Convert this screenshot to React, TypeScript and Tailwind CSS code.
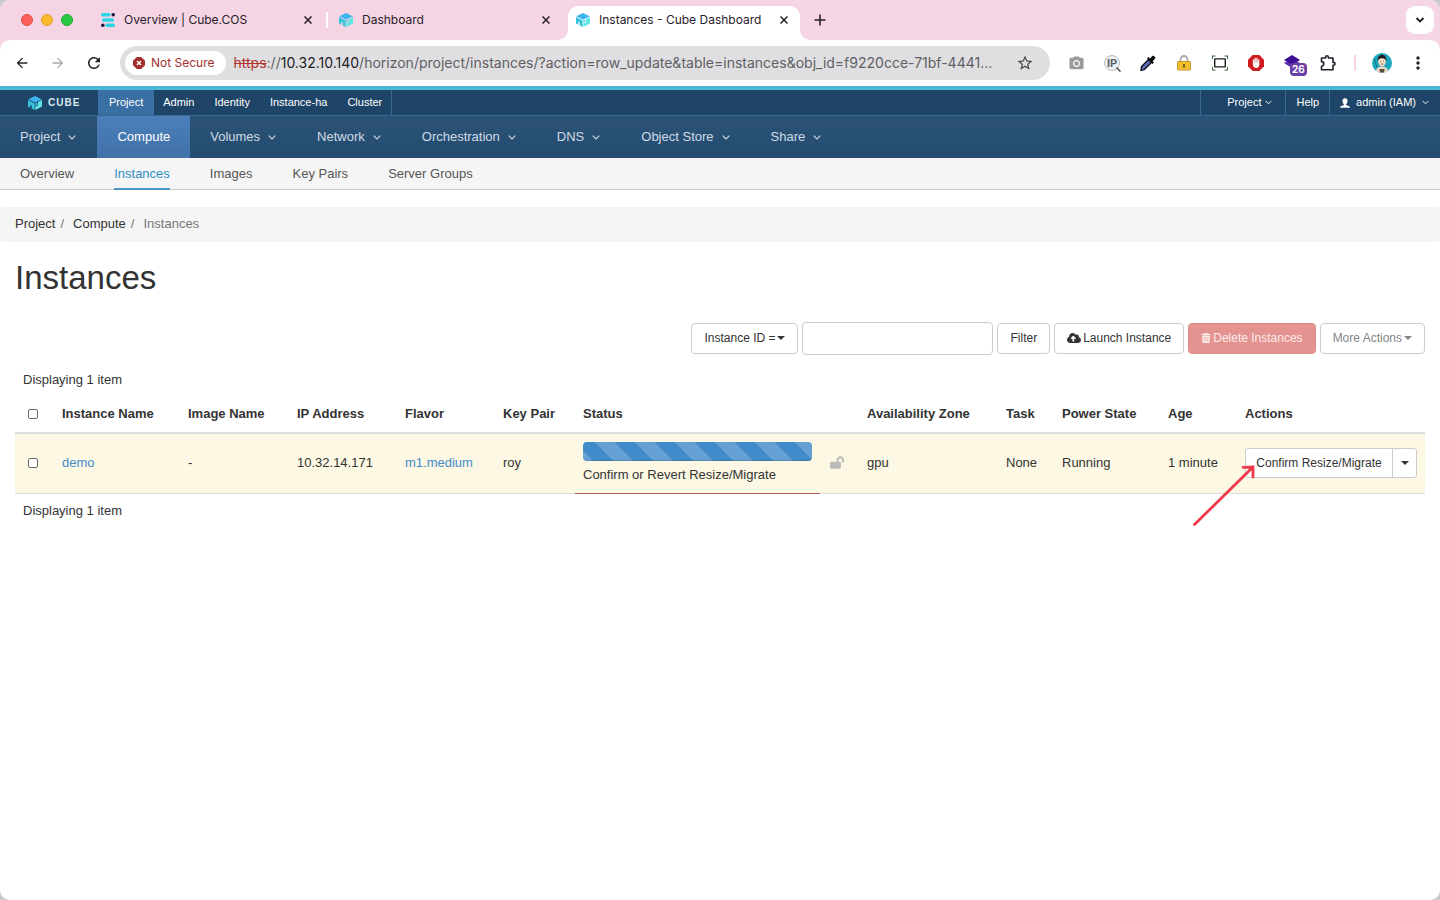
import { ReactNode, useState } from "react";
import { FaCloudUploadAlt, FaLockOpen, FaTrashAlt } from "react-icons/fa";
import {
  MdArrowBack,
  MdArrowForward,
  MdCameraAlt,
  MdMoreVert,
  MdRefresh,
  MdStarBorder,
} from "react-icons/md";

const topTabs = ["Admin", "Identity", "Instance-ha", "Cluster"];

const panels = [
  { name: "Project", menu: true },
  { name: "Compute", menu: false },
  { name: "Volumes", menu: true },
  { name: "Network", menu: true },
  { name: "Orchestration", menu: true },
  { name: "DNS", menu: true },
  { name: "Object Store", menu: true },
  { name: "Share", menu: true },
];

const subPanels = [
  "Overview",
  "Instances",
  "Images",
  "Key Pairs",
  "Server Groups",
];

const columns = [
  { name: "Instance Name", width: "w-[126px]" },
  { name: "Image Name", width: "w-[109px]" },
  { name: "IP Address", width: "w-[108px]" },
  { name: "Flavor", width: "w-[98px]" },
  { name: "Key Pair", width: "w-[80px]" },
  { name: "Status", width: "w-[245px]" },
  { name: "", width: "w-[39px]" },
  { name: "Availability Zone", width: "w-[139px]" },
  { name: "Task", width: "w-[56px]" },
  { name: "Power State", width: "w-[106px]" },
  { name: "Age", width: "w-[77px]" },
  { name: "Actions", width: "w-[188px]" },
];

function CubeLogo({ className }: { className?: string }) {
  return (
    <svg viewBox="0 0 28 28" className={className} aria-hidden="true">
      <path d="M14 0 27.500 6.500 14 13.500 0.500 6.500Z" fill="#3cb4ee" />
      <path d="M0 8 13.300 15V28L7.500 25V19L4.500 17.500V23.500L0 21Z" fill="#35c4dc" />
      <path d="M28 8V21L14.700 28V21L20 18.500V12.200Z" fill="#5fe6e4" />
      <path d="M14.700 15 18.500 13V17.500L14.700 19.500Z" fill="#46d3e2" />
    </svg>
  );
}

function CosLogo() {
  return (
    <svg viewBox="0 0 14 14" className="h-[14px] w-[14px]" aria-hidden="true">
      <g fill="#2fd3e6">
        <rect x="0" y="0" width="9.500" height="3.600" rx="1.500" />
        <rect x="1" y="5.200" width="12" height="3.600" rx="1.500" />
        <rect x="4.500" y="10.400" width="9.500" height="3.600" rx="1.500" />
      </g>
      <g fill="#1d1740">
        <circle cx="12.200" cy="1.800" r="1.800" />
        <circle cx="1.800" cy="12.200" r="1.800" />
      </g>
    </svg>
  );
}

function Chevron({ className }: { className?: string }) {
  return (
    <svg viewBox="0 0 8 5" className={className} fill="none" aria-hidden="true">
      <path d="M0.700 0.700 4 4 7.300 0.700" stroke="currentColor" strokeWidth="1.100" />
    </svg>
  );
}

function Caret() {
  return (
    <svg viewBox="0 0 8 4" className="h-1 w-2" aria-hidden="true">
      <path d="M0 0H8L4 4Z" fill="currentColor" />
    </svg>
  );
}

function UserIcon() {
  return (
    <svg viewBox="0 0 10 10" className="h-[10px] w-[10px]" aria-hidden="true">
      <path
        d="M5 0.300C3.400 0.300 2.500 1.400 2.500 3c0 1.300.6 2.600 1.400 3.200v.9L.8 8.300C.3 8.500.2 9 .2 9.700h9.600c0-.7-.1-1.200-.6-1.400L6.100 7.100v-.9C6.900 5.600 7.500 4.300 7.500 3 7.500 1.400 6.600.3 5 .3Z"
        fill="currentColor"
      />
    </svg>
  );
}

function BrowserTab({
  title,
  icon,
  active,
}: {
  title: string;
  icon: ReactNode;
  active?: boolean;
}) {
  return (
    <div
      className={
        active
          ? "relative flex h-[34px] w-[232px] items-center rounded-t-[10px] bg-white pr-3 pb-[6px] pl-2"
          : "flex h-[34px] w-[238px] items-center pr-4 pb-[6px] pl-[11px]"
      }
    >
      {active && (
        <>
          <svg viewBox="0 0 10 10" className="absolute bottom-0 -left-[10px] h-[10px] w-[10px]">
            <path d="M10 0V10H0A10 10 0 0 0 10 0Z" fill="#fff" />
          </svg>
          <svg viewBox="0 0 10 10" className="absolute -right-[10px] bottom-0 h-[10px] w-[10px]">
            <path d="M0 0V10H10A10 10 0 0 1 0 0Z" fill="#fff" />
          </svg>
        </>
      )}
      {icon}
      <span className="ml-[9px] flex-1 truncate text-xs text-[#27202a]">
        {title}
      </span>
      <button type="button" aria-label={`Close ${title}`}>
        <svg viewBox="0 0 8 8" className="h-2 w-2" fill="none">
          <path d="M.5.5 7.500 7.500M7.500.5.5 7.500" stroke="#27202a" strokeWidth="1.500" />
        </svg>
      </button>
    </div>
  );
}

function ToolButton({ label, children }: { label: string; children: ReactNode }) {
  return (
    <button
      type="button"
      aria-label={label}
      className="flex h-9 w-9 shrink-0 items-center justify-center"
    >
      {children}
    </button>
  );
}

function BrowserBar() {
  return (
    <header className="bg-[#f5d5e4] font-['Inter',sans-serif]">
      <div className="flex h-10 items-end">
        <div className="flex h-10 w-[90px] shrink-0 items-center gap-2 pl-[21px]">
          <span className="h-3 w-3 rounded-full border border-[#df4e47] bg-[#fb5f57]" />
          <span className="h-3 w-3 rounded-full border border-[#dfa02f] bg-[#fdbc2f]" />
          <span className="h-3 w-3 rounded-full border border-[#1fa933] bg-[#28c840]" />
        </div>
        <BrowserTab title="Overview | Cube.COS" icon={<CosLogo />} />
        <span className="-ml-[2px] mb-3 h-4 w-[2px] rounded bg-white" />
        <BrowserTab
          title="Dashboard"
          icon={<CubeLogo className="h-[14px] w-[14px]" />}
        />
        <span className="w-[2px]" />
        <BrowserTab
          title="Instances - Cube Dashboard"
          icon={<CubeLogo className="h-[14px] w-[14px]" />}
          active
        />
        <button type="button" aria-label="New tab" className="ml-[14px] flex h-10 items-center">
          <svg viewBox="0 0 12 12" className="h-3 w-3" fill="none">
            <path d="M6 .5V11.500M.5 6H11.500" stroke="#27202a" strokeWidth="1.600" />
          </svg>
        </button>
        <button
          type="button"
          aria-label="Search tabs"
          className="mr-[6px] mb-[6px] ml-auto flex h-7 w-7 items-center justify-center rounded-[9px] bg-white"
        >
          <svg viewBox="0 0 10 6" className="h-[6px] w-[10px]" fill="none">
            <path d="M1.500 1 5 4.500 8.500 1" stroke="#1f1f1f" strokeWidth="1.800" />
          </svg>
        </button>
      </div>

      <div className="flex h-[46px] items-center rounded-t-[10px] bg-white px-1">
        <ToolButton label="Back">
          <MdArrowBack className="h-4 w-4 text-[#27202a]" />
        </ToolButton>
        <ToolButton label="Forward">
          <MdArrowForward className="h-4 w-4 text-[#a8a8a8]" />
        </ToolButton>
        <ToolButton label="Reload">
          <MdRefresh className="h-[18px] w-[18px] text-[#27202a]" />
        </ToolButton>
        <div className="mx-2 flex h-[34px] min-w-0 flex-1 items-center rounded-full bg-[#dfdfe1] pr-4 pl-[5px]">
          <button
            type="button"
            className="flex h-6 shrink-0 items-center gap-[6px] rounded-full bg-white pr-[11px] pl-2 text-xs text-[#a3302c]"
          >
            <svg viewBox="0 0 12 12" className="h-3 w-3">
              <path d="M3.800 0H8.200L12 3.800V8.200L8.200 12H3.800L0 8.200V3.800Z" fill="#a3302c" />
              <path d="M4 4 8 8M8 4 4 8" stroke="#fff" strokeWidth="1.500" />
            </svg>
            Not Secure
          </button>
          <p className="ml-2 flex-1 truncate text-sm text-[#5f6064]">
            <span className="text-[#b3332e] line-through">https</span>://
            <span className="text-[#202124]">10.32.10.140</span>
            /horizon/project/instances/?action=row_update&amp;table=instances&amp;obj_id=f9220cce-71bf-4441...
          </p>
          <button type="button" aria-label="Bookmark this page">
            <MdStarBorder className="h-[18px] w-[18px] text-[#48484c]" />
          </button>
        </div>
        <ToolButton label="Screenshot">
          <MdCameraAlt className="h-[17px] w-[17px] text-[#9b9b9b]" />
        </ToolButton>
        <ToolButton label="IP lookup">
          <span className="relative flex h-4 w-4 items-center justify-center rounded-full border border-[#b5bcc4] bg-[#eef1f4] text-[11px] font-bold text-[#5b6167]">
            IP
            <svg viewBox="0 0 5 5" className="absolute -right-[2px] -bottom-[2px] h-[5px] w-[5px]">
              <path d="M.5.5 4.500 4.500" stroke="#444" strokeWidth="1.500" />
            </svg>
          </span>
        </ToolButton>
        <ToolButton label="Color picker">
          <svg viewBox="0 0 16 16" className="h-4 w-4">
            <path d="M8.500 4.500 11.500 7.500 4.500 14.500 1 15.500 1.500 11.500Z" fill="#5d68b5" stroke="#0b0b12" strokeWidth="1.300" />
            <path d="M7 3.500 8.500 2 10 3.400 12.300 1C13.500-.1 16.200 2.300 15 3.700L12.600 6.200 14 7.500 12.500 9Z" fill="#0b0b12" />
          </svg>
        </ToolButton>
        <ToolButton label="Certificate">
          <svg viewBox="0 0 14 16" className="h-4 w-[14px]">
            <path d="M3.500 8V4.500a3.500 3.500 0 0 1 7 0V8" fill="none" stroke="#a7a9ab" strokeWidth="1.800" />
            <rect x="0.500" y="6.500" width="13" height="8.500" rx="1" fill="#f0bf2e" stroke="#c9952a" />
            <path d="M7 9V12.500" stroke="#5b4210" strokeWidth="1.600" />
          </svg>
        </ToolButton>
        <ToolButton label="Capture area">
          <svg viewBox="0 0 16 16" className="h-4 w-4" fill="none">
            <path d="M.5 4V1H3.500M12.500 1H15.500V4M15.500 12V15H12.500M3.500 15H.5V12" stroke="#3c6b42" strokeWidth="1.100" />
            <rect x="2.700" y="3.900" width="10.600" height="8" rx=".5" stroke="#1f1f1f" strokeWidth="1.400" />
          </svg>
        </ToolButton>
        <ToolButton label="Ad blocker">
          <svg viewBox="0 0 16 16" className="h-4 w-4">
            <path d="M4.700 0H11.300L16 4.700V11.300L11.300 16H4.700L0 11.300V4.700Z" fill="#d01a1f" />
            <path
              d="M5.500 5V9M7.200 3.500V8M8.900 3.500V8M10.600 4.800V9"
              stroke="#fff"
              strokeWidth="1.300"
              strokeLinecap="round"
            />
            <path d="M4.900 7.500H11.200V10C11.200 12 10 13 8.300 13S4.900 12 4.900 9.500Z" fill="#fff" />
          </svg>
        </ToolButton>
        <ToolButton label="Layers, 26 items">
          <span className="relative h-4 w-4">
            <svg viewBox="0 0 16 16" className="h-4 w-4">
              <path d="M8 0 16 5 8 10 0 5Z" fill="#3f0e96" />
              <path d="M0 8 3 6.500 8 9.500 13 6.500 16 8 8 13Z" fill="#5b2bb0" />
            </svg>
            <span className="absolute top-2 left-[6px] rounded-[4px] bg-[#6a40a6] px-[2px] text-[10px] leading-[13px] font-bold text-white">
              26
            </span>
          </span>
        </ToolButton>
        <ToolButton label="Extensions">
          <svg viewBox="0 0 16 16" className="h-4 w-4" fill="none">
            <path
              d="M1.500 3H5.600V2.200a1.400 1.400 0 0 1 2.800 0V3H13V7.400h.6a1.400 1.400 0 0 1 0 2.800H13V14.800H1.500V11.200A2.300 2.300 0 0 0 1.500 6.600Z"
              stroke="#27202a"
              strokeWidth="1.600"
              strokeLinejoin="round"
            />
          </svg>
        </ToolButton>
        <span className="mx-2 h-4 w-[2px] bg-[#f5d5e4]" />
        <ToolButton label="Profile">
          <svg viewBox="0 0 20 20" className="h-5 w-5">
            <circle cx="10" cy="10" r="10" fill="#1ba7bd" />
            <path d="M4 18C4.500 14.500 7 13.500 10 13.500S15.500 14.500 16 18A10 10 0 0 1 4 18Z" fill="#e8d9c6" />
            <path d="M7.500 16H12.500L12 19.500H8Z" fill="#5d4a3a" />
            <ellipse cx="10" cy="8.500" rx="3.800" ry="4.800" fill="#f4dcc3" />
            <path d="M5.800 8C5.300 4 7.500 1.800 10 1.800S14.700 4 14.200 8C13.500 6.500 13 5.300 10 5.300S6.500 6.500 5.800 8Z" fill="#221a1c" />
            <path d="M8.300 8.500H9M11 8.500H11.700M9 11H11" stroke="#4a3029" strokeWidth=".7" />
            <path d="M2.500 6 5 15" stroke="#175d6b" strokeWidth=".8" />
          </svg>
        </ToolButton>
        <ToolButton label="Menu">
          <MdMoreVert className="h-5 w-5 text-[#27202a]" />
        </ToolButton>
      </div>
    </header>
  );
}

function Navigation() {
  return (
    <div className="border-t-4 border-[#4ab9d8]">
      <nav className="flex border-b border-[#386896] bg-[#1e4467] text-[11px] leading-[25px] text-white">
        <a
          href="#home"
          className="flex w-[98px] items-center gap-[6px] pl-7 text-[10px] font-bold tracking-widest text-[#dce6ef]"
        >
          <CubeLogo className="h-[14px] w-[14px]" />
          CUBE
        </a>
        <a href="#project" className="bg-[#3a6fa4] px-[11px]">
          Project
        </a>
        <div className="flex gap-5 border-r border-[#386896] px-[9px]">
          {topTabs.map((tab) => (
            <a key={tab} href={`#${tab.toLowerCase()}`}>
              {tab}
            </a>
          ))}
        </div>
        <div className="ml-auto flex">
          <button
            type="button"
            className="flex items-center gap-1 border-l border-[#386896] pr-[13px] pl-[26px]"
          >
            Project
            <Chevron className="h-[5px] w-[7px]" />
          </button>
          <a href="#help" className="border-l border-[#386896] px-[10px]">
            Help
          </a>
          <button
            type="button"
            className="flex items-center gap-[6px] border-l border-[#386896] pr-[11px] pl-[10px]"
          >
            <UserIcon />
            admin (IAM)
            <Chevron className="h-[5px] w-[7px]" />
          </button>
        </div>
      </nav>
      <nav className="flex bg-linear-to-b from-[#2c5376] to-[#234c70] text-[13px] leading-[42px] text-[#cfdbe6]">
        {panels.map(({ name, menu }) =>
          menu ? (
            <button key={name} type="button" className="flex items-center gap-2 pr-[21px] pl-5">
              {name}
              <Chevron className="h-[5px] w-2" />
            </button>
          ) : (
            <a
              key={name}
              href={`#${name}`}
              className="bg-linear-to-b from-[#4c7fba] to-[#4071a9] px-5 text-white"
            >
              {name}
            </a>
          ),
        )}
      </nav>
      <nav className="flex gap-10 border-b border-[#ccc] bg-[#f5f5f5] px-5 text-[13px] leading-[31px] text-[#555]">
        {subPanels.map((name) => (
          <a
            key={name}
            href={`#${name}`}
            className={
              name === "Instances"
                ? "-mb-px h-8 border-b-2 border-[#4899c8] text-[#2e8fbf]"
                : ""
            }
          >
            {name}
          </a>
        ))}
      </nav>
    </div>
  );
}

function InstanceTable() {
  const [selected, setSelected] = useState(false);
  const box =
    "block h-[10px] w-[10px] appearance-none rounded-[2px] border border-[#6b6b6b] bg-white checked:bg-[#428bca]";
  const cell = "px-2 pb-[2px]";

  return (
    <table className="w-full table-fixed border-collapse text-left text-[13px] leading-5">
      <caption className="px-2 py-[6px] text-left">Displaying 1 item</caption>
      <thead>
        <tr className="border-b-2 border-[#ddd]">
          <th className="w-[39px] py-2 pl-[13px]">
            <input
              type="checkbox"
              aria-label="Select all instances"
              className={box}
              checked={selected}
              onChange={() => setSelected(!selected)}
            />
          </th>
          {columns.map(({ name, width }) => (
            <th key={name} className={`${width} px-2 py-2 whitespace-nowrap`}>
              {name}
            </th>
          ))}
        </tr>
      </thead>
      <tbody>
        <tr className="border-b border-[#ddd] bg-[#fcf8e3]">
          <td className="pb-[2px] pl-[13px]">
            <input
              type="checkbox"
              aria-label="Select demo"
              className={box}
              checked={selected}
              onChange={() => setSelected(!selected)}
            />
          </td>
          <td className={cell}>
            <a href="#demo" className="text-[#428bca]">
              demo
            </a>
          </td>
          <td className={cell}>-</td>
          <td className={cell}>10.32.14.171</td>
          <td className={cell}>
            <a href="#flavor" className="text-[#428bca]">
              m1.medium
            </a>
          </td>
          <td className={cell}>roy</td>
          <td className="border-b border-b-[#b5595a] p-2">
            <div className="mb-1 h-[19px] rounded-[4px] bg-[#428bca] bg-[linear-gradient(45deg,rgba(255,255,255,0.18)_25%,transparent_25%,transparent_50%,rgba(255,255,255,0.18)_50%,rgba(255,255,255,0.18)_75%,transparent_75%)] bg-size-[40px_40px] bg-position-[12px_0] shadow-[inset_0_-1px_0_rgba(0,0,0,0.15)]" />
            Confirm or Revert Resize/Migrate
          </td>
          <td className="pb-[2px] pl-[10px] text-[#bbb]">
            <FaLockOpen className="h-[13px] w-[14px]" aria-label="Unlocked" />
          </td>
          <td className={cell}>gpu</td>
          <td className={cell}>None</td>
          <td className={cell}>Running</td>
          <td className={cell}>1 minute</td>
          <td className={cell}>
            <div className="relative flex h-[30px] text-xs">
              <button
                type="button"
                className="flex-1 rounded-l-[3px] border border-[#ccc] bg-white whitespace-nowrap"
              >
                Confirm Resize/Migrate
              </button>
              <button
                type="button"
                aria-label="More actions for demo"
                className="-ml-px flex w-[25px] items-center justify-center rounded-r-[3px] border border-[#ccc] bg-white"
              >
                <Caret />
              </button>
              <svg
                viewBox="0 0 68 66"
                className="pointer-events-none absolute top-[14px] -left-[55px] h-[66px] w-[68px]"
                fill="none"
                stroke="#ee3a4b"
                strokeWidth="2.800"
                strokeLinecap="round"
                aria-hidden="true"
              >
                <path d="M4.500 62.500 63 5M53 5.300 63 5V15" />
              </svg>
            </div>
          </td>
        </tr>
      </tbody>
    </table>
  );
}

export default function App() {
  const [filter, setFilter] = useState("");
  const button =
    "flex h-[31px] items-center gap-[2px] rounded-[4px] border border-[#ccc] bg-white px-3 pb-[2px] whitespace-nowrap";

  return (
    <div className="min-h-screen bg-[#c9c9c9] font-['Liberation_Sans',Arial,sans-serif] text-[#333]">
      <div className="min-h-screen overflow-hidden rounded-[10px] bg-white">
        <BrowserBar />
        <Navigation />
        <main>
          <ol className="mt-[17px] flex rounded-[4px] bg-[#f5f5f5] px-[15px] pb-[2px] text-[13px] leading-[33px]">
            <li>
              <a href="#project">Project</a>
              <span className="mr-[9px] ml-[5px] text-[#777]">/</span>
            </li>
            <li>
              <a href="#compute">Compute</a>
              <span className="mr-[9px] ml-[5px] text-[#777]">/</span>
            </li>
            <li className="text-[#777]">Instances</li>
          </ol>
          <div className="px-[15px]">
            <h1 className="mt-4 text-[33px] leading-10">Instances</h1>
            <div className="mt-6 flex items-center justify-end gap-1 text-xs">
              <button type="button" className={button}>
                Instance ID =
                <Caret />
              </button>
              <input
                type="text"
                aria-label="Filter value"
                className="h-[33px] w-[191px] rounded-[4px] border border-[#ccc] bg-white px-3"
                value={filter}
                onChange={(e) => setFilter(e.target.value)}
              />
              <button type="button" className={button}>
                Filter
              </button>
              <button type="button" className={button}>
                <FaCloudUploadAlt className="h-[14px] w-[14px]" />
                Launch Instance
              </button>
              <button
                type="button"
                disabled
                className="flex h-[31px] items-center gap-[2px] rounded-[4px] border border-[#e08a87] bg-[#e59391] px-3 pb-[2px] whitespace-nowrap text-[#fbecec]"
              >
                <FaTrashAlt className="h-[10px] w-[10px]" />
                Delete Instances
              </button>
              <button type="button" disabled className={`${button} text-[#858585]`}>
                More Actions
                <Caret />
              </button>
            </div>
            <div className="mt-[9px]">
              <InstanceTable />
            </div>
            <p className="px-2 py-[7px] text-[13px] leading-5">
              Displaying 1 item
            </p>
          </div>
        </main>
      </div>
    </div>
  );
}
